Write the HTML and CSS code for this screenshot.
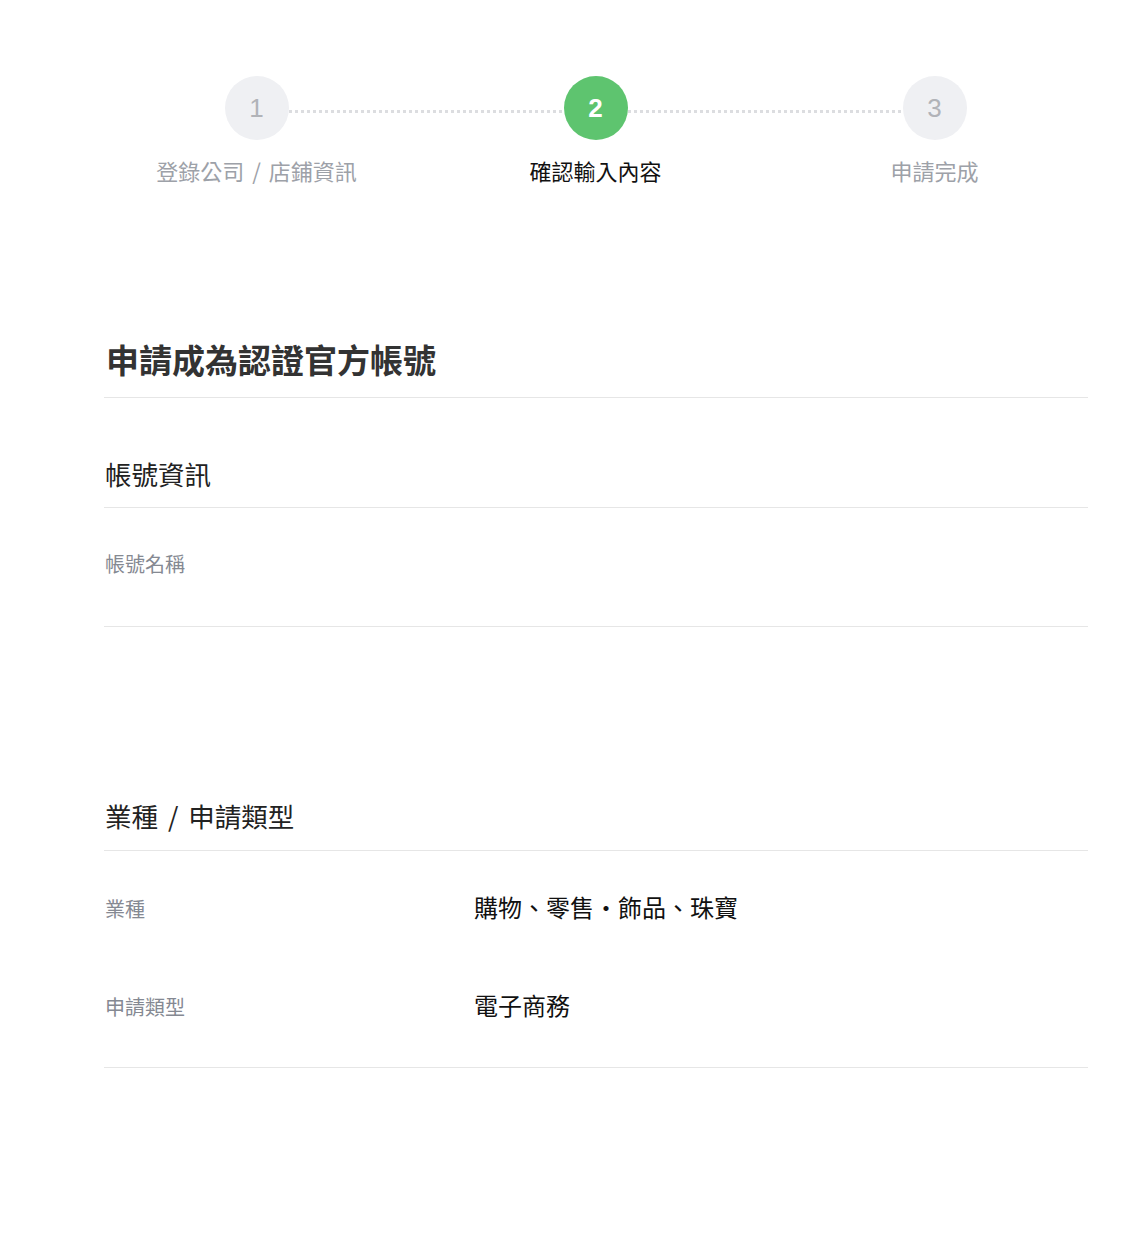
FILE: index.html
```html
<!DOCTYPE html>
<html lang="zh-Hant">
<head>
<meta charset="utf-8">
<title>申請成為認證官方帳號</title>
<link rel="stylesheet" href="styles.css">
</head>
<body>
<div class="stepper">
  <div class="step done">
    <div class="circle">1</div>
    <div class="step-label">登錄公司 / 店鋪資訊</div>
  </div>
  <div class="step active">
    <div class="circle">2</div>
    <div class="step-label">確認輸入內容</div>
  </div>
  <div class="step last">
    <div class="circle">3</div>
    <div class="step-label">申請完成</div>
  </div>
</div>

<main class="content">
  <h1 class="page-title">申請成為認證官方帳號</h1>

  <section class="section">
    <h2 class="section-title">帳號資訊</h2>
    <div class="rows">
      <div class="row">
        <div class="row-label">帳號名稱</div>
        <div class="row-value"></div>
      </div>
    </div>
  </section>

  <section class="section second">
    <h2 class="section-title">業種 / 申請類型</h2>
    <div class="rows">
      <div class="row">
        <div class="row-label">業種</div>
        <div class="row-value">購物、零售・飾品、珠寶</div>
      </div>
      <div class="row">
        <div class="row-label">申請類型</div>
        <div class="row-value">電子商務</div>
      </div>
    </div>
  </section>
</main>
</body>
</html>
```

FILE: styles.css
```css
* { box-sizing: border-box; }

body {
  margin: 0;
  background: #fff;
  font-family: "Noto Sans CJK TC", "Noto Sans", "Liberation Sans", sans-serif;
  color: #111;
}

.stepper {
  display: grid;
  grid-template-columns: repeat(3, 339px);
  width: 1017px;
  margin-left: 87px;
  padding-top: 76px;
}

.step {
  position: relative;
  display: flex;
  flex-direction: column;
  align-items: center;
}

.step::after {
  content: "";
  position: absolute;
  top: 34px;
  left: calc(50% + 32px);
  width: calc(100% - 64px);
  height: 3px;
  background-image: linear-gradient(to right, #dcdde0 3px, transparent 3px);
  background-size: 6px 3px;
  background-repeat: repeat-x;
}

.step.last::after { display: none; }

.circle {
  position: relative;
  z-index: 1;
  width: 64px;
  height: 64px;
  border-radius: 50%;
  background: #eff0f3;
  color: #b1b3b8;
  font-family: "Liberation Sans", "Noto Sans", sans-serif;
  font-size: 26px;
  line-height: 64px;
  text-align: center;
}

.active .circle {
  background: #5ec46f;
  color: #fff;
  font-weight: 700;
}

.step-label {
  margin-top: 14px;
  font-size: 22px;
  line-height: 32px;
  color: #9da1a8;
  white-space: nowrap;
  word-spacing: 3px;
}

.active .step-label { color: #111; }

.content {
  width: 984px;
  margin-left: 104px;
  padding-top: 148px;
}

.page-title {
  margin: 0;
  padding: 0 0 13px 2px;
  font-size: 33px;
  line-height: 50px;
  font-weight: 700;
  color: #333;
  border-bottom: 1px solid #e6e6e6;
}

.section { margin-top: 58px; }
.section.second { margin-top: 171px; }

.section-title {
  margin: 0;
  padding: 0 0 15px 1px;
  font-size: 26.5px;
  line-height: 36px;
  font-weight: 400;
  color: #222;
  border-bottom: 1px solid #e6e6e6;
  word-spacing: 4px;
}

.second .section-title { padding-bottom: 16px; }

.rows {
  padding: 7px 0 13px;
  border-bottom: 1px solid #e6e6e6;
}

.row {
  display: flex;
  align-items: baseline;
  height: 98px;
  padding-top: 34px;
  line-height: 30px;
}

.row-label {
  flex: 0 0 370px;
  padding-left: 1px;
  font-size: 20px;
  color: #858992;
}

.row-value {
  font-size: 24px;
  color: #111;
}
```
